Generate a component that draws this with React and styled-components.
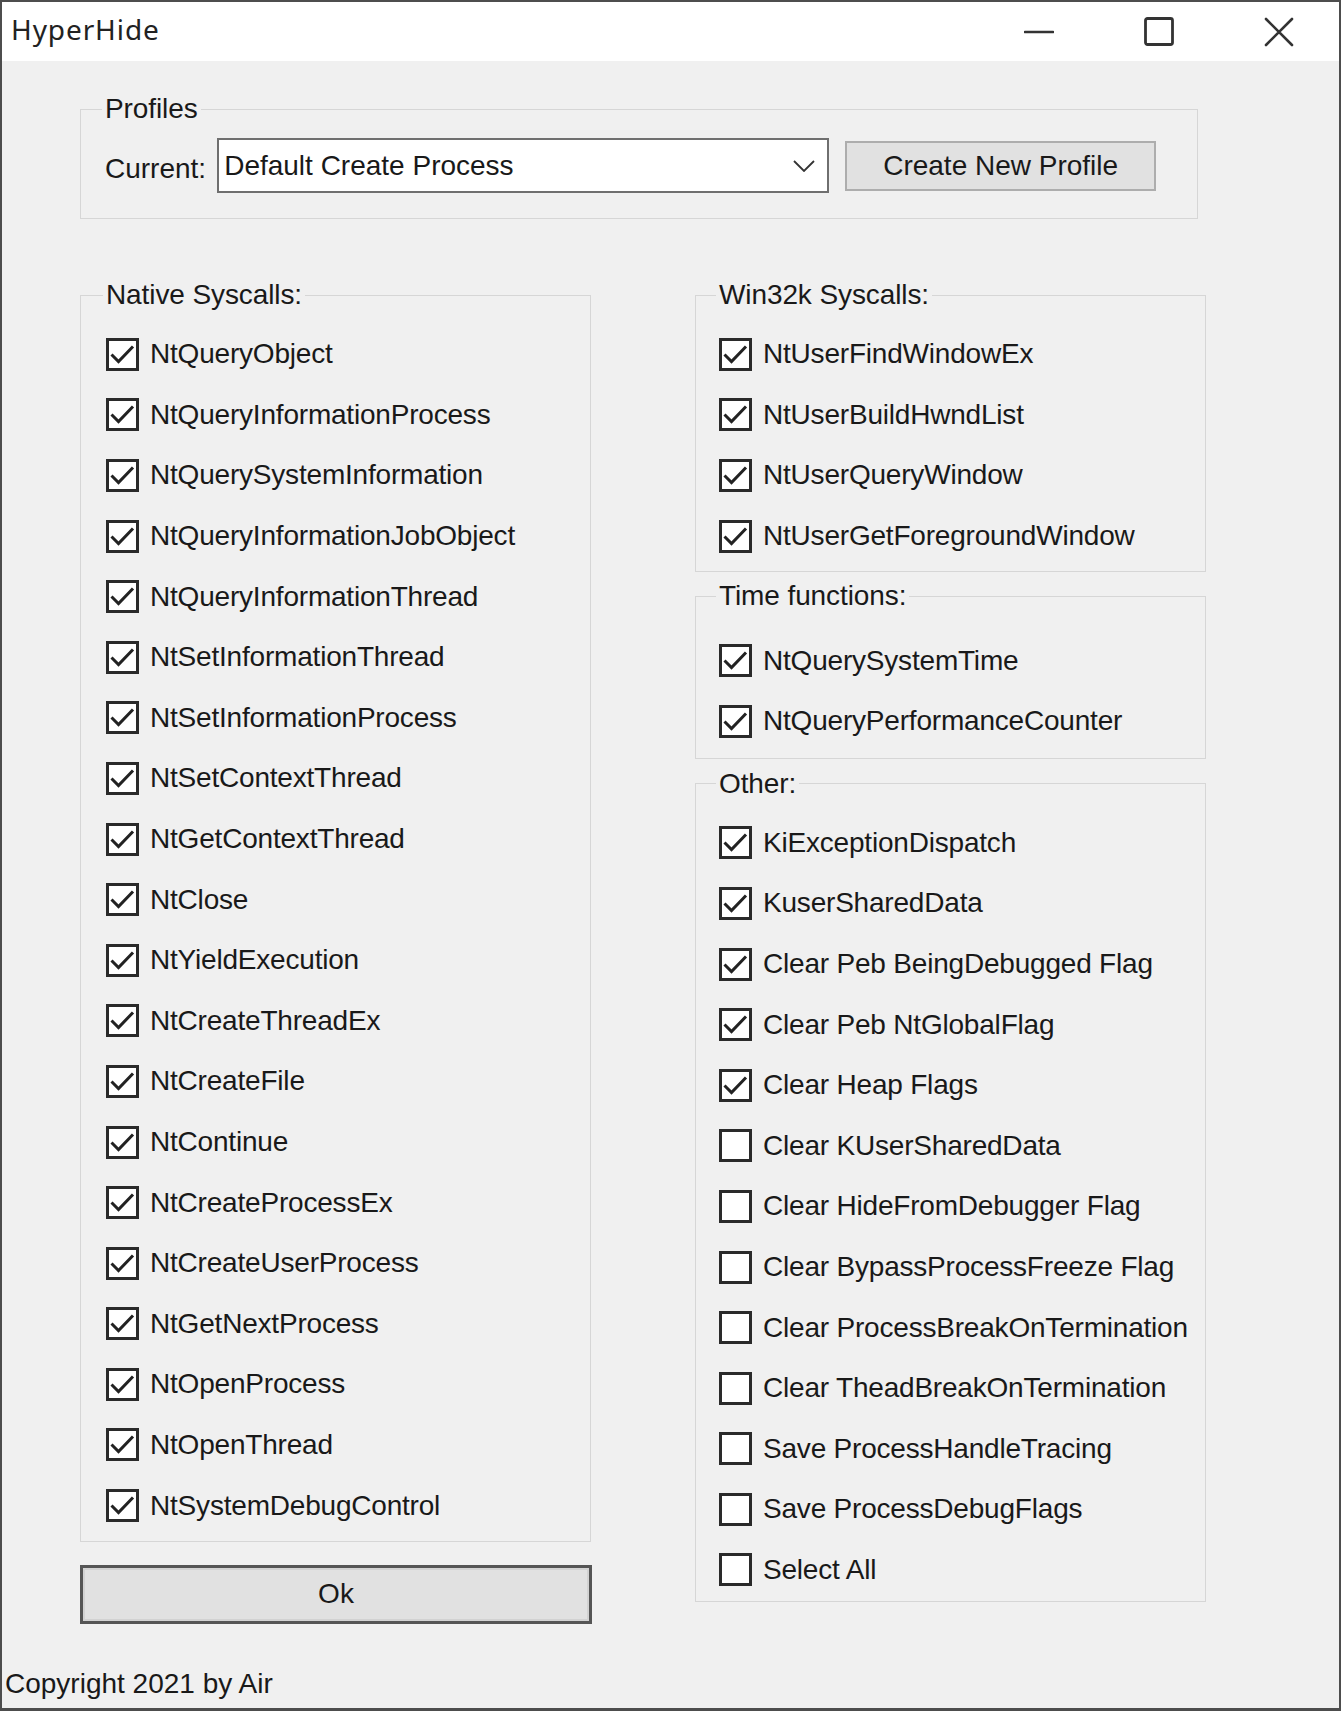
import React from "react";
import styled, { createGlobalStyle } from "styled-components";

const Global = createGlobalStyle`
  html, body { margin: 0; padding: 0; background: #f0f0f0; }
  * { box-sizing: border-box; }
`;

const FONT = `"Liberation Sans", Arial, sans-serif`;

const Window = styled.div`
  width: 1341px;
  height: 1711px;
  border: 2px solid #4d4d4d;
  border-bottom-width: 3px;
  display: flex;
  flex-direction: column;
  background: #f0f0f0;
  font-family: ${FONT};
  color: #191919;
`;

const TitleBar = styled.div`
  height: 59px;
  flex: 0 0 auto;
  background: #ffffff;
  display: flex;
  align-items: center;
  justify-content: space-between;
`;

const Title = styled.div`
  font-family: "Noto Sans", "Open Sans", sans-serif;
  font-size: 28px;
  letter-spacing: 0.9px;
  padding: 0 0 5px 9px;
  color: #222;
`;

const Controls = styled.div`
  display: flex;
  height: 100%;
`;

const ControlButton = styled.div`
  width: 120px;
  height: 100%;
  display: flex;
  align-items: center;
  justify-content: center;
`;

const Client = styled.div`
  flex: 1;
  display: flex;
  flex-direction: column;
`;

const Content = styled.div`
  padding: 32px 0 0 78px;
`;

const Group = styled.fieldset`
  margin: 0;
  min-width: 0;
  border: 1px solid #d6d6d6;
  padding: ${(p) => p.$pt || 13}px 0 ${(p) => p.$pb || 5}px ${(p) => p.$pl || 24}px;
  width: ${(p) => p.$w || "100%"};
`;

const Legend = styled.legend`
  font-size: 28px;
  line-height: 32px;
  padding: 0 3px;
  margin-left: -3px;
  letter-spacing: -0.1px;
`;

const ProfileRow = styled.div`
  display: flex;
  align-items: center;
  height: 55px;
`;

const Label = styled.span`
  font-size: 28px;
  line-height: 32px;
  margin-right: 11px;
  margin-top: 6px;
`;

const Combo = styled.div`
  width: 612px;
  height: 55px;
  background: #fff;
  border: 2px solid #6f6f6f;
  display: flex;
  align-items: center;
  justify-content: space-between;
  padding: 0 12px 0 5px;
  font-size: 28px;
`;

const WinButton = styled.div`
  width: ${(p) => p.$w || "auto"};
  height: ${(p) => p.$h}px;
  background: #e1e1e1;
  border: ${(p) => (p.$focus ? "3px solid #555555" : "2px solid #adadad")};
  box-shadow: ${(p) => (p.$focus ? "inset 0 0 0 2px #d2d2d2" : "none")};
  display: flex;
  align-items: center;
  justify-content: center;
  font-size: 28px;
  margin-left: ${(p) => p.$ml || 0}px;
  margin-top: ${(p) => p.$mt || 0}px;
`;

const Columns = styled.div`
  display: grid;
  grid-template-columns: 511px 511px;
  column-gap: 104px;
  margin-top: 60px;
  align-items: start;
`;

const Column = styled.div`
  display: flex;
  flex-direction: column;
  gap: ${(p) => p.$gap || 0}px;
`;

const Row = styled.div`
  height: 60.6px;
  display: flex;
  align-items: center;
  gap: 11px;
`;

const Box = styled.div`
  width: 33px;
  height: 33px;
  flex: 0 0 auto;
  border: 3px solid #2a2a2a;
  background: #fff;
  display: flex;
  align-items: center;
  justify-content: center;
`;

const ItemText = styled.span`
  font-size: 28px;
  line-height: 32px;
  letter-spacing: -0.2px;
  white-space: nowrap;
`;

const Footer = styled.div`
  margin-top: auto;
  padding: 0 0 8px 3px;
  font-size: 28px;
  line-height: 32px;
`;

function Check({ checked, label }) {
  return (
    <Row>
      <Box>
        {checked && (
          <svg width="27" height="27" viewBox="0 0 27 27">
            <path d="M2.5 13.5 L9.5 20.5 L24 5.5" fill="none" stroke="#222" strokeWidth="3" />
          </svg>
        )}
      </Box>
      <ItemText>{label}</ItemText>
    </Row>
  );
}

const native = [
  "NtQueryObject",
  "NtQueryInformationProcess",
  "NtQuerySystemInformation",
  "NtQueryInformationJobObject",
  "NtQueryInformationThread",
  "NtSetInformationThread",
  "NtSetInformationProcess",
  "NtSetContextThread",
  "NtGetContextThread",
  "NtClose",
  "NtYieldExecution",
  "NtCreateThreadEx",
  "NtCreateFile",
  "NtContinue",
  "NtCreateProcessEx",
  "NtCreateUserProcess",
  "NtGetNextProcess",
  "NtOpenProcess",
  "NtOpenThread",
  "NtSystemDebugControl",
];

const win32k = [
  "NtUserFindWindowEx",
  "NtUserBuildHwndList",
  "NtUserQueryWindow",
  "NtUserGetForegroundWindow",
];

const timeFns = ["NtQuerySystemTime", "NtQueryPerformanceCounter"];

const other = [
  ["KiExceptionDispatch", true],
  ["KuserSharedData", true],
  ["Clear Peb BeingDebugged Flag", true],
  ["Clear Peb NtGlobalFlag", true],
  ["Clear Heap Flags", true],
  ["Clear KUserSharedData", false],
  ["Clear HideFromDebugger Flag", false],
  ["Clear BypassProcessFreeze Flag", false],
  ["Clear ProcessBreakOnTermination", false],
  ["Clear TheadBreakOnTermination", false],
  ["Save ProcessHandleTracing", false],
  ["Save ProcessDebugFlags", false],
  ["Select All", false],
];

export default function App() {
  return (
    <>
      <Global />
      <Window>
        <TitleBar>
          <Title>HyperHide</Title>
          <Controls>
            <ControlButton>
              <svg width="30" height="6" viewBox="0 0 30 6">
                <line x1="1" y1="3" x2="29" y2="3" stroke="#333" strokeWidth="2.6" strokeLinecap="round" />
              </svg>
            </ControlButton>
            <ControlButton>
              <svg width="30" height="30" viewBox="0 0 30 30">
                <rect x="1.5" y="1.5" width="27" height="26" rx="2" fill="none" stroke="#333" strokeWidth="2.8" />
              </svg>
            </ControlButton>
            <ControlButton>
              <svg width="30" height="30" viewBox="0 0 30 30">
                <path d="M2 2 L28 28 M28 2 L2 28" stroke="#333" strokeWidth="2.6" strokeLinecap="round" />
              </svg>
            </ControlButton>
          </Controls>
        </TitleBar>
        <Client>
          <Content>
            <Group $w="1118px" $pt={13} $pb={25} $pl={24}>
              <Legend>Profiles</Legend>
              <ProfileRow>
                <Label>Current:</Label>
                <Combo>
                  <span>Default Create Process</span>
                  <svg width="22" height="12" viewBox="0 0 22 12">
                    <path d="M1 1 L11 11 L21 1" fill="none" stroke="#333" strokeWidth="1.8" />
                  </svg>
                </Combo>
                <WinButton $w="311px" $h={50} $ml={16}>
                  Create New Profile
                </WinButton>
              </ProfileRow>
            </Group>
            <Columns>
              <Column>
                <Group $pt={13} $pb={5} $pl={25}>
                  <Legend>Native Syscalls:</Legend>
                  {native.map((n) => (
                    <Check key={n} label={n} checked />
                  ))}
                </Group>
                <WinButton $focus $h={59} $mt={23} $w="512px">
                  Ok
                </WinButton>
              </Column>
              <Column>
                <Group $pt={13} $pb={5} $pl={23}>
                  <Legend>Win32k Syscalls:</Legend>
                  {win32k.map((n) => (
                    <Check key={n} label={n} checked />
                  ))}
                </Group>
                <Group $pt={18} $pb={6} $pl={23} style={{ marginTop: 8 }}>
                  <Legend>Time functions:</Legend>
                  {timeFns.map((n) => (
                    <Check key={n} label={n} checked />
                  ))}
                </Group>
                <Group $pt={13} $pb={1} $pl={23} style={{ marginTop: 9 }}>
                  <Legend>Other:</Legend>
                  {other.map(([n, c]) => (
                    <Check key={n} label={n} checked={c} />
                  ))}
                </Group>
              </Column>
            </Columns>
          </Content>
          <Footer>Copyright 2021 by Air</Footer>
        </Client>
      </Window>
    </>
  );
}
